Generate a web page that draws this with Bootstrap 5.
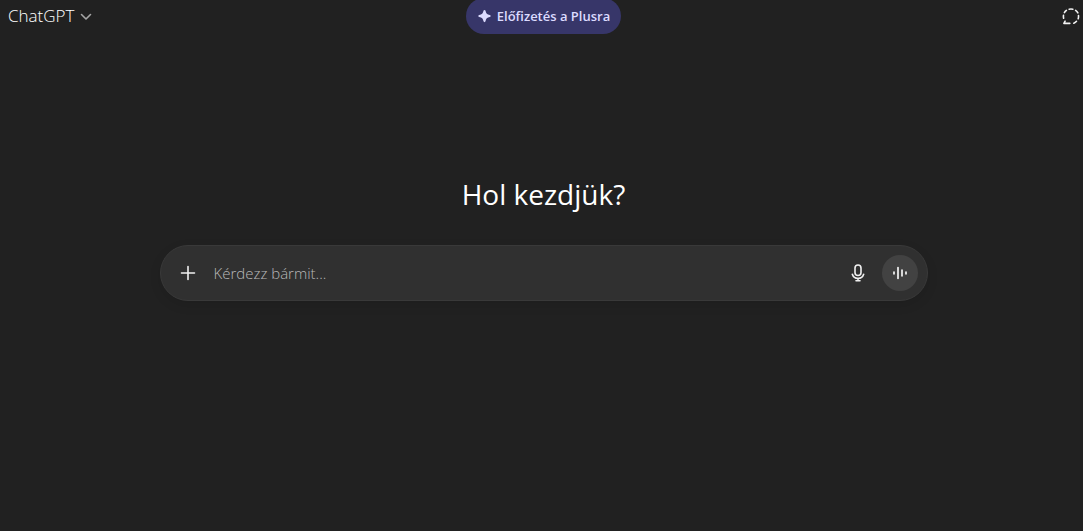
<!DOCTYPE html>
<html lang="hu">
<head>
<meta charset="utf-8">
<meta name="viewport" content="width=device-width, initial-scale=1">
<title>ChatGPT</title>
<link href="https://cdn.jsdelivr.net/npm/bootstrap@5.3.0/dist/css/bootstrap.min.css" rel="stylesheet">
<style>
body { background: #212121; color: #fff; font-family: "Open Sans", "Noto Sans", sans-serif; }
svg { display: block; }
.btn { --bs-btn-border-width: 0; --bs-btn-padding-x: 0; --bs-btn-padding-y: 0; color: #fff; }
.btn:hover { color: #fff; }
.topbar { height: 34px; }
.model-btn { font-size: 17px; line-height: 32px; font-weight: 300; padding-bottom: 2px; }
.plus-btn, .plus-btn:hover { background: #373669; color: #dcdbff; }
.plus-btn { height: 36px; margin-top: -2px; padding: 0 11px; border-radius: 18px; font-size: 13px; font-weight: 600; line-height: 34px; }
.stage { padding-top: 139px; }
.headline { font-size: 28px; line-height: 42px; font-weight: 400; margin-bottom: 30px; }
.composer { max-width: 768px; height: 56px; background: #303030; border: 1px solid #393939; border-radius: 28px; padding: 0 9px; box-shadow: 0 4px 12px rgba(0, 0, 0, .1); }
.tool-btn { width: 36px; height: 36px; }
.tool-group { gap: 6px; }
.voice-btn, .voice-btn:hover { background: #424242; }
.prompt-input, .prompt-input:focus { background: transparent; color: #fff; font-size: 15px; line-height: 24px; font-weight: 300; box-shadow: none; }
.prompt-input.prompt-input::placeholder { color: #b8b8b8; opacity: 1; }
</style>
</head>
<body class="min-vh-100 ps-1">
<header class="topbar row g-0 align-items-center">
  <div class="col d-flex">
    <button type="button" class="btn model-btn d-flex align-items-center gap-1 ms-1">ChatGPT
      <svg width="16" height="16" viewBox="0 0 16 16" fill="none" stroke="#a5a5a5" stroke-width="1.6" stroke-linecap="round" stroke-linejoin="round" aria-hidden="true"><path d="M3.500 6.500 8 11l4.500-4.500"/></svg>
    </button>
  </div>
  <div class="col-auto">
    <button type="button" class="btn plus-btn d-flex align-items-center gap-1">
      <svg width="16" height="16" viewBox="0 0 16 16" fill="currentColor" aria-hidden="true"><path d="M7.500 1.900c.5 0 .9.300 1 .8.6 2.800 1.500 3.700 4.300 4.300 1.100.2 1.100 1.800 0 2-2.800.6-3.700 1.500-4.300 4.300-.2 1.100-1.800 1.100-2 0C5.900 10.500 5 9.600 2.200 9c-1.100-.2-1.100-1.800 0-2C5 6.400 5.900 5.500 6.500 2.700c.1-.5.500-.8 1-.8z"/></svg>
      Előfizetés a Plusra
    </button>
  </div>
  <div class="col d-flex justify-content-end">
    <button type="button" class="btn" aria-label="Ideiglenes csevegés">
      <svg width="22" height="22" viewBox="0 0 22 22" fill="none" stroke="#f2f2f2" stroke-width="1.6" stroke-linecap="round" stroke-linejoin="round" aria-hidden="true"><path d="M8.200 3.200a7.500 7.500 0 0 1 3.600 0M14.600 4.400a7.500 7.500 0 0 1 2.300 2.500M17.500 9.500a7.500 7.500 0 0 1-.3 3.200M15.500 15.300a7.500 7.500 0 0 1-2.700 1.900M8.800 17.400H2.900l1.200-2.300M2.600 12.200a7.500 7.500 0 0 1-.1-3M3.400 6.600a7.500 7.500 0 0 1 2-2.200"/></svg>
    </button>
  </div>
</header>
<main class="stage px-3 text-center">
  <h1 class="headline">Hol kezdjük?</h1>
  <form class="composer d-flex align-items-center mx-auto">
    <button type="button" class="btn tool-btn d-flex align-items-center justify-content-center flex-shrink-0" aria-label="Hozzáadás">
      <svg width="20" height="20" viewBox="0 0 20 20" fill="none" stroke="#f0f0f0" stroke-width="1.6" stroke-linecap="round" aria-hidden="true"><path d="M10 3.500v13M3.500 10h13"/></svg>
    </button>
    <input type="text" class="prompt-input form-control border-0 rounded-0 py-0 ps-2 flex-grow-1" placeholder="Kérdezz bármit..." aria-label="Kérdezz bármit">
    <div class="tool-group d-flex flex-shrink-0">
      <button type="button" class="btn tool-btn d-flex align-items-center justify-content-center" aria-label="Diktálás">
        <svg width="20" height="20" viewBox="0 0 20 20" fill="none" stroke="#f0f0f0" stroke-width="1.6" stroke-linecap="round" aria-hidden="true"><rect x="7" y="2" width="6" height="10.500" rx="3"/><path d="M4.300 11.300a6 6 0 0 0 11.400 0M10 15.300v2.300M8 17.700h4"/></svg>
      </button>
      <button type="button" class="btn tool-btn voice-btn rounded-circle d-flex align-items-center justify-content-center" aria-label="Hangmód">
        <svg width="20" height="20" viewBox="0 0 20 20" fill="none" stroke="#fff" stroke-width="1.6" stroke-linecap="round" aria-hidden="true"><path d="M4 9v2M8 4.500v11M12 7v6M16 9v2"/></svg>
      </button>
    </div>
  </form>
</main>
<script src="https://cdn.jsdelivr.net/npm/bootstrap@5.3.0/dist/js/bootstrap.bundle.min.js"></script>
</body>
</html>
